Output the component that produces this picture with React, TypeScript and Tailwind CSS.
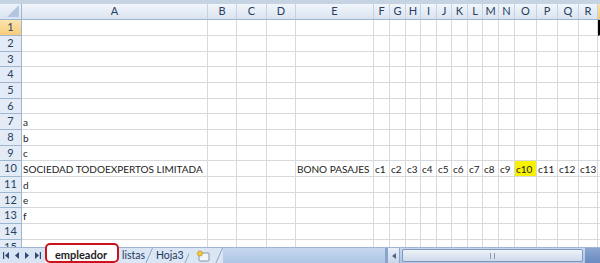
import React from "react"

const COLS: { name: string; w: number }[] = [
  { name: "A", w: 186 },
  { name: "B", w: 29 },
  { name: "C", w: 30 },
  { name: "D", w: 29 },
  { name: "E", w: 78 },
  { name: "F", w: 16 },
  { name: "G", w: 16 },
  { name: "H", w: 15 },
  { name: "I", w: 16 },
  { name: "J", w: 15 },
  { name: "K", w: 16 },
  { name: "L", w: 15 },
  { name: "M", w: 16 },
  { name: "N", w: 16 },
  { name: "O", w: 22 },
  { name: "P", w: 21 },
  { name: "Q", w: 21 },
  { name: "R", w: 19 },
  { name: "S", w: 40 },
]

const DATA: Record<number, Record<string, string>> = {
  7: { A: "a" },
  8: { A: "b" },
  9: { A: "c" },
  10: {
    A: "SOCIEDAD TODOEXPERTOS LIMITADA",
    E: "BONO PASAJES",
    F: "c1",
    G: "c2",
    H: "c3",
    I: "c4",
    J: "c5",
    K: "c6",
    L: "c7",
    M: "c8",
    N: "c9",
    O: "c10",
    P: "c11",
    Q: "c12",
    R: "c13",
  },
  11: { A: "d" },
  12: { A: "e" },
  13: { A: "f" },
}

const font = { fontFamily: "Lato, 'Liberation Sans', sans-serif" }

const HeaderRow = () => (
  <div className="flex h-[16px] shrink-0 border-b border-[#9eb6ce]">
    <div className="relative w-[22px] shrink-0 border-r border-[#9eb6ce] bg-gradient-to-b from-[#eef3fa] to-[#d9e4f2]">
      <svg className="absolute right-[2px] bottom-[2px]" width="12" height="12" viewBox="0 0 12 12">
        <polygon points="12,0 12,12 0,12" fill="#b4c6dd" />
      </svg>
    </div>
    {COLS.map((c) => (
      <div
        key={c.name}
        style={{ width: c.w }}
        className={`shrink-0 flex items-center justify-center border-r border-[#c5d2e2] text-[11px] text-[#27415f] ${
          c.name === "S" ? "bg-gradient-to-b from-[#fbe3a7] to-[#f6c66d]" : "bg-gradient-to-b from-[#f1f5fb] to-[#dae4f1]"
        }`}
      >
        {c.name === "S" ? "" : c.name}
      </div>
    ))}
  </div>
)

const Row = ({ n, h }: { n: number; h: string }) => {
  const data = DATA[n] || {}
  return (
    <div className={`flex shrink-0 ${h}`}>
      <div
        className={`w-[22px] shrink-0 flex items-center justify-center border-r border-b border-[#9eb6ce] text-[11px] text-[#27415f] ${
          n === 1 ? "bg-gradient-to-b from-[#fbe4ac] to-[#f7cc7c]" : "bg-[#e3ebf6]"
        }`}
      >
        {n}
      </div>
      {COLS.map((c) => {
        const v = data[c.name]
        const yellow = n === 10 && c.name === "O"
        const active = n === 1 && c.name === "S"
        return (
          <div
            key={c.name}
            style={{ width: c.w }}
            className={`shrink-0 flex items-end pb-[1px] pl-[1px] border-r border-b border-[#d6dade] text-[10px] leading-[12px] text-[#1c1c1c] whitespace-nowrap ${
              yellow ? "bg-[#f7f300]" : "bg-white"
            } ${active ? "border-l-[2px] border-l-black" : ""}`}
          >
            {v}
          </div>
        )
      })}
    </div>
  )
}

const Arrow = ({ dir, bar }: { dir: "l" | "r"; bar?: boolean }) => (
  <svg width="8" height="7" viewBox="0 0 8 7">
    {dir === "l" ? <polygon points="6,0 6,7 2,3.5" fill="#2d4a74" /> : <polygon points="2,0 2,7 6,3.5" fill="#2d4a74" />}
    {bar && dir === "l" && <rect x="0" y="0" width="1.2" height="7" fill="#2d4a74" />}
    {bar && dir === "r" && <rect x="6.8" y="0" width="1.2" height="7" fill="#2d4a74" />}
  </svg>
)

const Slash = () => (
  <svg width="8" height="16" viewBox="0 0 8 16" className="shrink-0">
    <line x1="0.5" y1="16" x2="7.5" y2="0" stroke="#8ea5c6" strokeWidth="1" />
  </svg>
)

const TabBar = () => (
  <div className="relative flex h-[16px] shrink-0 bg-[#d8e4f3] border-t border-[#9fb5d3]" style={font}>
    <div className="w-[45px] shrink-0 flex items-center justify-around pl-[2px] pr-[3px]">
      <Arrow dir="l" bar />
      <Arrow dir="l" />
      <Arrow dir="r" />
      <Arrow dir="r" bar />
    </div>
    <div className="w-[72px] shrink-0 flex items-center justify-center bg-white text-[11px] font-bold text-[#1e1e1e] mt-[-1px]">
      empleador
    </div>
    <div className="w-[36px] shrink-0 flex items-center bg-[#dbe6f4]">
      <span className="pl-[5px] text-[10.5px] text-[#1f3a62]">listas</span>
      <div className="ml-auto"><Slash /></div>
    </div>
    <div className="w-[36px] shrink-0 flex items-center bg-[#dbe6f4]">
      <span className="pl-[3px] text-[10.5px] text-[#1f3a62]">Hoja3</span>
      <div className="ml-auto"><Slash /></div>
    </div>
    <div className="w-[34px] shrink-0 flex items-center bg-[#dbe6f4]">
      <svg width="16" height="12" viewBox="0 0 16 12" className="ml-[7px]">
        <rect x="3" y="3" width="10" height="8" rx="1" fill="#f2f5fa" stroke="#6d7f99" strokeWidth="0.8" />
        <circle cx="4" cy="3.5" r="2.6" fill="#f3c63c" stroke="#b7891b" strokeWidth="0.6" />
      </svg>
      <div className="ml-auto"><Slash /></div>
    </div>
    <div className="flex-1 flex bg-gradient-to-b from-[#c7d8ee] to-[#aec5e6]">
      <div className="flex-1" />
      <div className="w-[3px] bg-[#8aa4cb]" />
      <div className="w-[12px] flex items-center justify-center bg-gradient-to-b from-[#e9eff8] to-[#c8d6ea] border-r border-[#8ea7cc]">
        <svg width="4" height="6" viewBox="0 0 4 6"><polygon points="4,0 4,6 0,3" fill="#4a6590" /></svg>
      </div>
      <div className="w-[181px] mx-[2px] my-[1px] flex items-center justify-center rounded-[2px] border border-[#7f98bd] bg-gradient-to-b from-[#eef2f8] to-[#cfdaea]">
        <div className="w-[5px] h-[6px] border-l border-r border-[#8a9cb8]" />
      </div>
      <div className="w-[15px] bg-gradient-to-b from-[#8aa5cf] to-[#6a8bc0]" />
    </div>
    <div className="absolute left-[45px] top-[-5px] w-[74px] h-[20px] rounded-[5px] border-[2px] border-[#c8141c]" />
  </div>
)

export default function App() {
  const rows = Array.from({ length: 14 }, (_, i) => i + 1)
  return (
    <div className="w-[600px] h-[263px] overflow-hidden bg-white flex flex-col" style={font}>
      <div className="h-[4px] shrink-0 bg-[#c6d3e3]" />
      <HeaderRow />
      {rows.map((n) => (
        <Row key={n} n={n} h={n % 3 === 0 ? "h-[15px]" : "h-[16px]"} />
      ))}
      <div className="h-[7px] overflow-hidden shrink-0">
        <Row n={15} h="h-[16px]" />
      </div>
      <TabBar />
    </div>
  )
}
